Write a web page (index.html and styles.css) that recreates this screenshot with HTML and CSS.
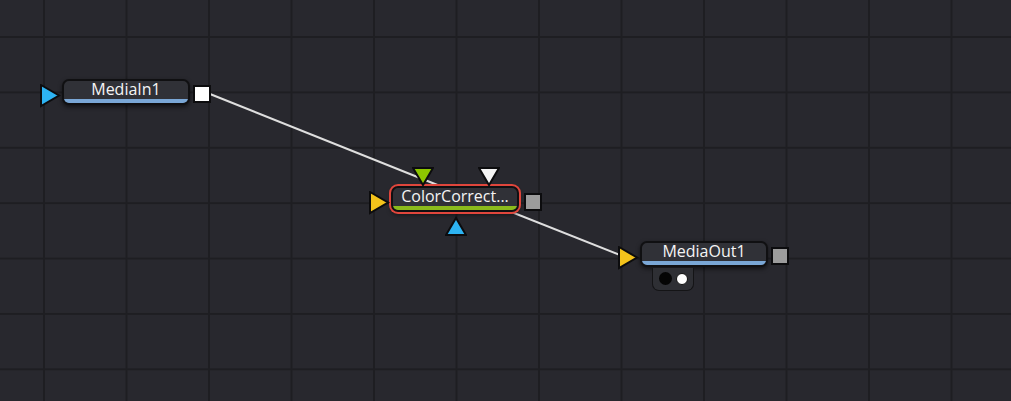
FILE: index.html
```html
<!DOCTYPE html>
<html lang="en">
<head>
<meta charset="utf-8"/>
<title>Flow</title>
<link rel="stylesheet" href="styles.css">
</head>
<body>
<div class="flow">
  <svg class="wires" width="1011" height="401">
    <line x1="210" y1="94" x2="455" y2="192"/>
    <line x1="456" y1="190" x2="625" y2="257"/>
  </svg>

  <div class="node" style="left:62px;top:79px">
    <svg class="port in" width="22" height="24"><polygon class="blue" points="1,1 19,11.5 1,22"/></svg>
    <div class="tile">
      <div class="label">MediaIn1</div>
      <div class="bar bar-blue"></div>
    </div>
    <div class="out white"></div>
  </div>

  <div class="node" style="left:391px;top:186px">
    <svg class="port in" width="22" height="24"><polygon class="yellow" points="1,1 19,11.5 1,22"/></svg>
    <svg class="port top-a" width="22" height="20"><polygon class="green" points="1,1 21,1 11,18"/></svg>
    <svg class="port top-b" width="22" height="20"><polygon class="white-fill" points="1,1 21,1 11,18"/></svg>
    <svg class="port bottom" width="22" height="20"><polygon class="blue" points="1,19 21,19 11,2"/></svg>
    <div class="tile selected">
      <div class="label">ColorCorrect...</div>
      <div class="bar bar-green"></div>
    </div>
    <div class="out gray sel-out"></div>
  </div>

  <div class="node" style="left:640px;top:241px">
    <svg class="port in" width="22" height="24"><polygon class="yellow" points="1,1 19,11.5 1,22"/></svg>
    <div class="tile">
      <div class="label">MediaOut1</div>
      <div class="bar bar-blue"></div>
    </div>
    <div class="out gray"></div>
    <div class="views">
      <span class="dot dark"></span>
      <span class="dot light"></span>
    </div>
  </div>
</div>
</body>
</html>
```

FILE: styles.css
```css
body {
  margin: 0;
  background: #28282e;
  font-family: "Open Sans", "Noto Sans", sans-serif;
}

.flow {
  position: relative;
  width: 1011px;
  height: 401px;
  overflow: hidden;
  background-color: #28282e;
  background-image:
    linear-gradient(to right, #1e1e22 0, #1e1e22 2px, transparent 2px),
    linear-gradient(to bottom, #1e1e22 0, #1e1e22 2px, transparent 2px);
  background-size: 82.5px 55.4px;
  background-position: 43px 36px;
}

.wires {
  position: absolute;
  left: 0;
  top: 0;
}
.wires line {
  stroke: #dedede;
  stroke-width: 2;
}

.node {
  position: absolute;
  width: 128px;
  height: 26px;
}

.tile {
  box-sizing: border-box;
  width: 128px;
  height: 26px;
  border: 2px solid #101012;
  border-radius: 7px;
  background: #303137;
  overflow: hidden;
  display: flex;
  flex-direction: column;
  box-shadow: 0 2px 4px rgba(0, 0, 0, 0.55);
}
.tile.selected {
  box-shadow: 0 0 0 2px #e0463c, 0 3px 4px rgba(0, 0, 0, 0.5);
}

.label {
  flex: 1;
  color: #f4f4f4;
  font-size: 16px;
  line-height: 16px;
  text-align: center;
  white-space: nowrap;
}

.bar {
  height: 4px;
}
.bar-blue { background: #7aa7d6; }
.bar-green { background: #8bbb1c; }

.port {
  position: absolute;
}
.port polygon {
  stroke: #0c0c0e;
  stroke-width: 2;
  stroke-linejoin: miter;
}
.port.in { left: -22px; top: 5px; }
.port.top-a { left: 21px; top: -19px; }
.port.top-b { left: 87px; top: -19px; }
.port.bottom { left: 54px; top: 30px; }

.blue { fill: #2db3f2; }
.yellow { fill: #f4c31b; }
.green { fill: #8dc600; }
.white-fill { fill: #f4f4f4; }

.out {
  position: absolute;
  left: 131px;
  top: 6px;
  box-sizing: border-box;
  width: 18px;
  height: 18px;
  border: 2px solid #0c0c0e;
}
.out.white { background: #ffffff; }
.out.gray { background: #9c9c9c; }
.out.sel-out { left: 133px; top: 7px; }

.views {
  position: absolute;
  left: 12px;
  top: 27px;
  box-sizing: border-box;
  width: 42px;
  height: 23px;
  background: #2e2f34;
  border: 1px solid #141416;
  border-top: none;
  border-radius: 0 0 7px 7px;
  display: flex;
  align-items: center;
  justify-content: center;
  gap: 4px;
  padding-bottom: 1px;
}

.dot {
  width: 13px;
  height: 13px;
  border-radius: 50%;
  box-sizing: border-box;
}
.dot.dark { background: #050505; }
.dot.light {
  width: 12px;
  height: 12px;
  background: #ffffff;
  border: 1px solid #111;
}
```
